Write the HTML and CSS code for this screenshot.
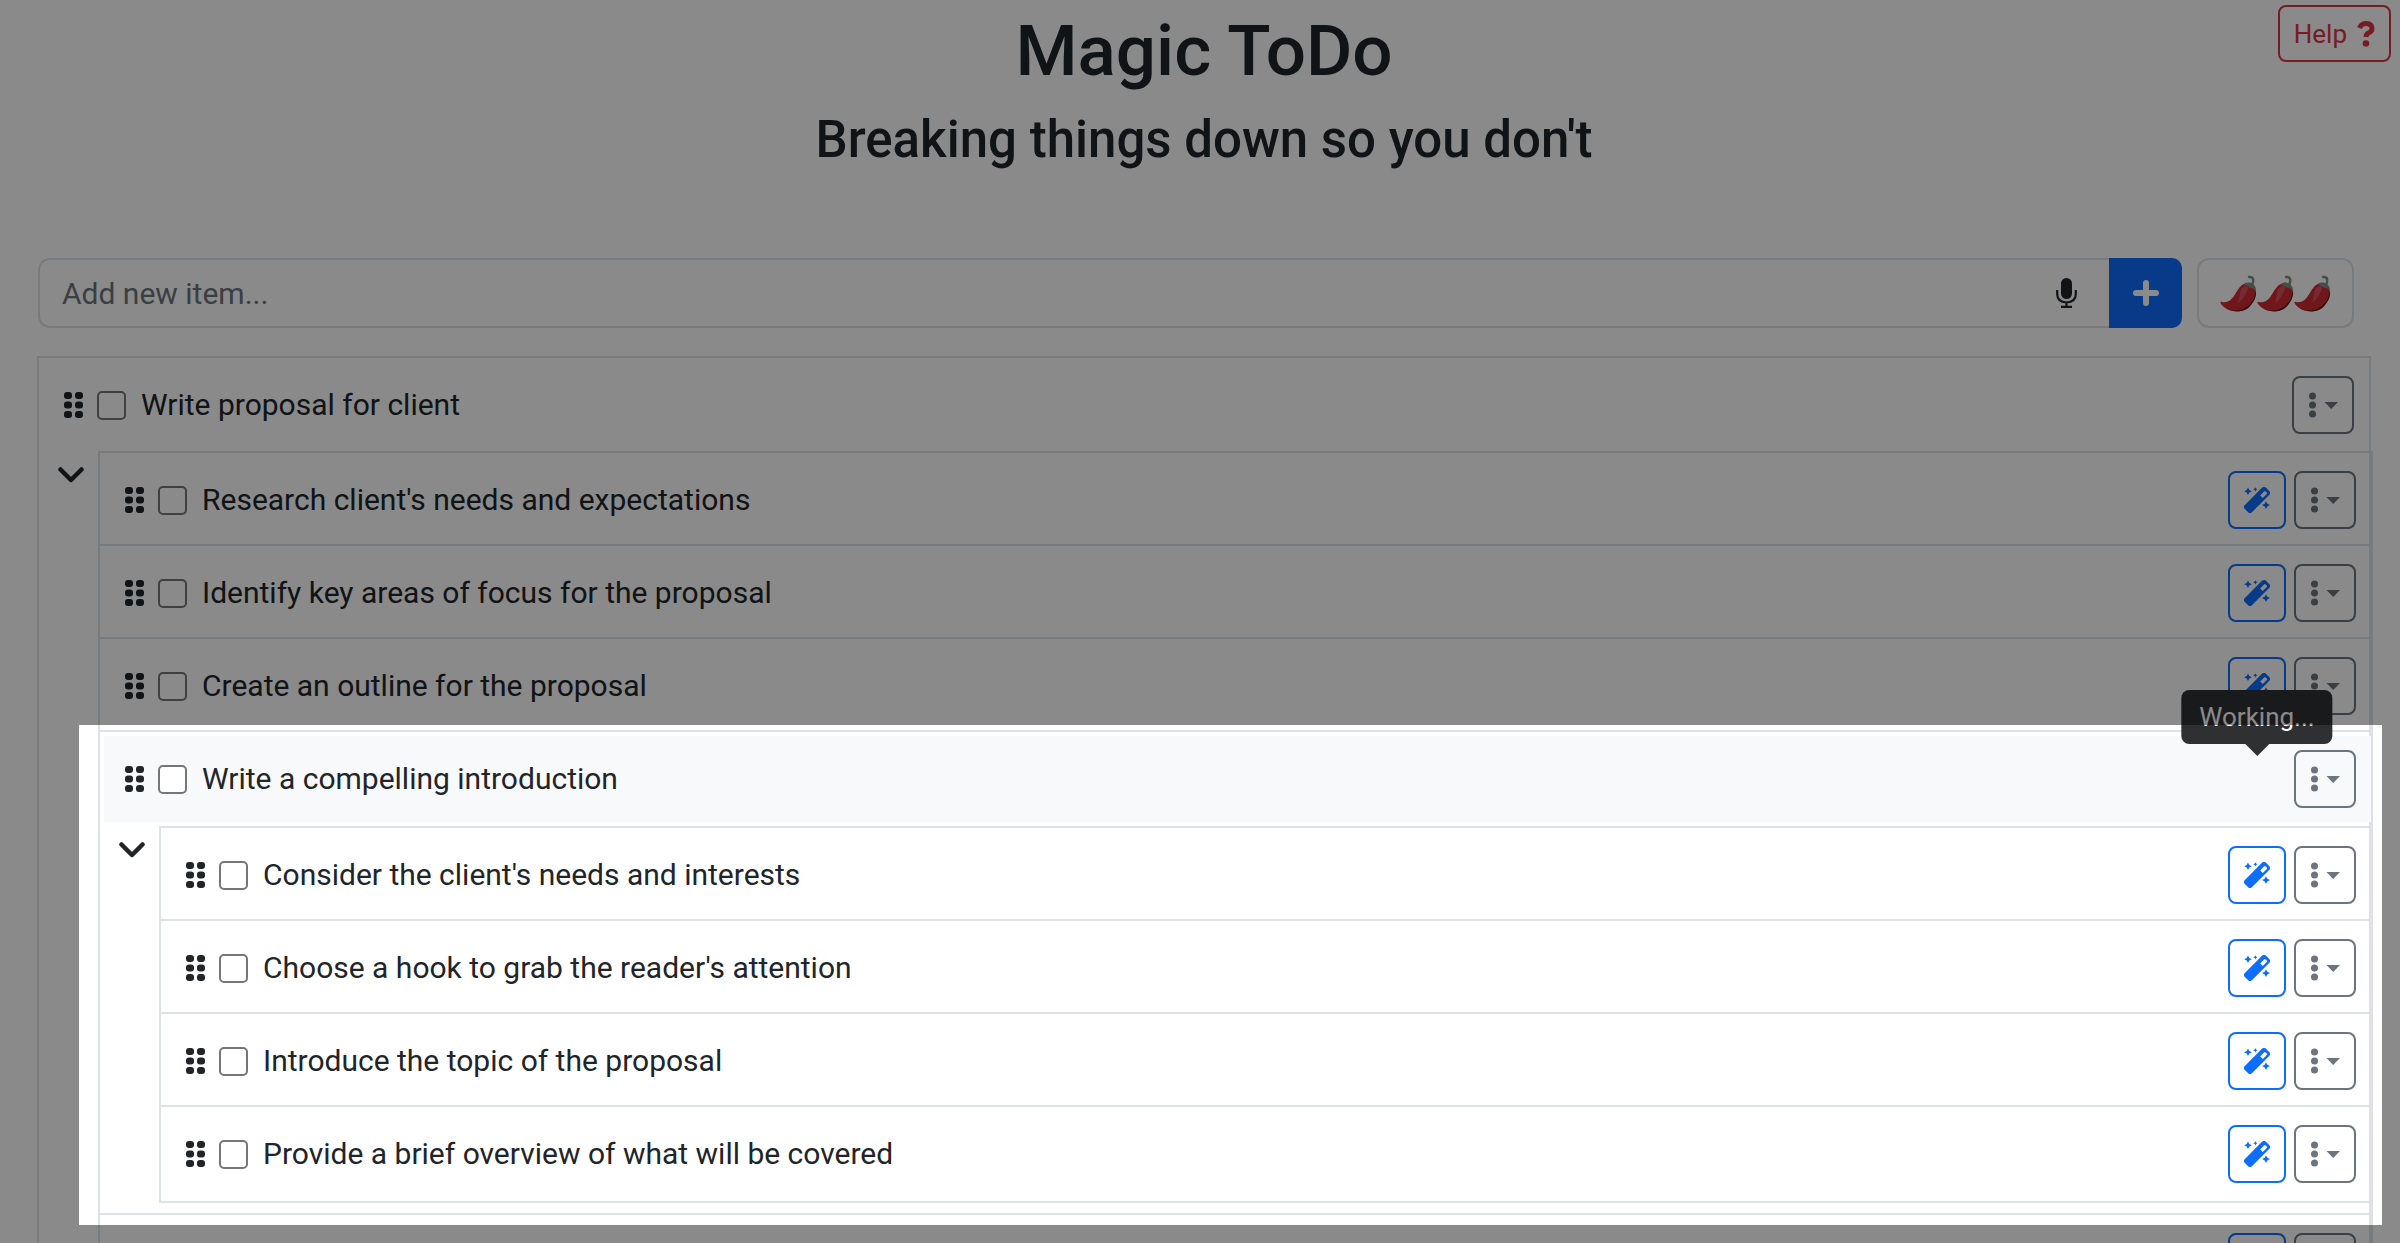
FILE: index.html
```html
<!DOCTYPE html>
<html lang="en">
  <head>
    <meta charset="UTF-8" />
    <title>Magic ToDo</title>
    <link rel="stylesheet" href="styles.css">
  </head>
  <body>
    <!-- shared icons -->
    <svg class="sprite" aria-hidden="true">
      <symbol id="grip" viewBox="0 0 19 26">
        <rect x="0" y="0" width="8" height="7" rx="3" />
        <rect x="11" y="0" width="8" height="7" rx="3" />
        <rect x="0" y="9.5" width="8" height="7" rx="3" />
        <rect x="11" y="9.5" width="8" height="7" rx="3" />
        <rect x="0" y="19" width="8" height="7" rx="3" />
        <rect x="11" y="19" width="8" height="7" rx="3" />
      </symbol>
      <symbol id="wand" viewBox="0 0 26 26">
        <path fill-rule="evenodd" d="M.4 18.400 18.200.6q1.800-1.400 3.600 0l3.600 3.600q1.400 1.800 0 3.600l-17.800 17.800q-1.600 1.200-3.200 0L.4 21.600q-1.200-1.600 0-3.200zM16.200 8.400l2.600 2.600 4-4q.6-.8 0-1.600L21.600 4.400q-.8-.6-1.600 0z" />
        <path d="M4 .4l1.300 2.500 2.500 1.300-2.500 1.300L4 8 2.700 5.500.2 4.200l2.500-1.300zM11.400.2l.7 1.400 1.400.7-1.400.7-.7 1.400-.7-1.400-1.400-.7 1.400-.7zM22 14.200l1.300 2.600 2.600 1.300-2.600 1.300-1.300 2.600-1.300-2.600-2.600-1.300 2.600-1.300z" />
      </symbol>
      <symbol id="dots" viewBox="0 0 29 26">
        <circle cx="3.5" cy="4" r="3.5" />
        <circle cx="3.5" cy="13" r="3.5" />
        <circle cx="3.5" cy="22" r="3.5" />
        <path d="M15.500 10h13.500L22.200 17z" />
      </symbol>
      <symbol id="chevron" viewBox="0 0 26 16">
        <path d="M2.500 2.500 13 13 23.500 2.500" fill="none" stroke="currentColor" stroke-width="4.500" stroke-linecap="round" stroke-linejoin="round" />
      </symbol>
      <symbol id="pepper" viewBox="0 0 37 37">
        <path d="M32 10C34 6 34 1.500 29 2" fill="none" stroke="#7b9285" stroke-width="2.500" stroke-linecap="round" />
        <path d="M20 12C24 7 32 7 35 13 37 21 33 29 27 34 18 39 5 36 .5 28 0 27 1 26.500 2 27 13 29 15 17 20 12z" fill="#cf2b35" />
        <path d="M35 14C36 22 32 29 25 33 18 37 9 36 4 32 14 39 25 37 31 30 36 24 37 19 35 14z" fill="#5e0a12" />
        <path d="M22 13C25 10 29 11 28 14 26 18 23 25 18 28 20 23 19 18 22 13z" fill="#d9505a" />
        <path d="M24 9C28 6 35 8 36 14 34 15 32 12 30 13 28 11 26 11 24 9z" fill="#7b9285" />
      </symbol>
    </svg>

    <button class="help">
      Help
      <svg viewBox="0 0 18 26" width="18" height="26">
        <path d="M2.500 7Q4.500 2.500 9 2.500q6 0 6 5 0 3-3.500 4.500-2.500 1.200-2.500 4" fill="none" stroke="currentColor" stroke-width="5" />
        <circle cx="9" cy="22.500" r="3.300" fill="currentColor" />
      </svg>
    </button>

    <div class="container">
      <h1>Magic ToDo</h1>
      <h2>Breaking things down so you don't</h2>

      <div class="toolbar">
        <div class="input-group">
          <input type="text" placeholder="Add new item..." aria-label="Add new item" />
          <button class="mic" aria-label="Speak">
            <svg viewBox="0 0 21 30" width="21" height="30">
              <rect x="5" y="0" width="11" height="21" rx="5.500" fill="currentColor" />
              <path d="M1.200 12v4q0 8 9.300 8.500 9.300-.5 9.300-8.500v-4M10.500 24v4M5 28.800h11" fill="none" stroke="currentColor" stroke-width="2.200" />
            </svg>
          </button>
          <button class="add" aria-label="Add">
            <svg viewBox="0 0 26 26" width="26" height="26">
              <path d="M13 3v20M3 13h20" stroke="currentColor" stroke-width="6" stroke-linecap="round" />
            </svg>
          </button>
        </div>
        <button class="spice" aria-label="Spiciness">
          <svg><use href="#pepper" /></svg><svg><use href="#pepper" /></svg><svg><use href="#pepper" /></svg>
        </button>
      </div>

      <ul class="list root">
        <li>
          <div class="row">
            <svg class="grip"><use href="#grip" /></svg>
            <input type="checkbox" id="t1" />
            <label for="t1">Write proposal for client</label>
            <button class="btn more" aria-label="More"><svg><use href="#dots" /></svg></button>
          </div>
          <div class="children">
            <button class="toggle" aria-label="Collapse"><svg><use href="#chevron" /></svg></button>
            <ul class="list sub">
              <li>
                <div class="row">
                  <svg class="grip"><use href="#grip" /></svg>
                  <input type="checkbox" id="t2" />
                  <label for="t2">Research client's needs and expectations</label>
                  <button class="btn magic" aria-label="Break down"><svg><use href="#wand" /></svg></button>
                  <button class="btn more" aria-label="More"><svg><use href="#dots" /></svg></button>
                </div>
              </li>
              <li>
                <div class="row">
                  <svg class="grip"><use href="#grip" /></svg>
                  <input type="checkbox" id="t3" />
                  <label for="t3">Identify key areas of focus for the proposal</label>
                  <button class="btn magic" aria-label="Break down"><svg><use href="#wand" /></svg></button>
                  <button class="btn more" aria-label="More"><svg><use href="#dots" /></svg></button>
                </div>
              </li>
              <li>
                <div class="row">
                  <svg class="grip"><use href="#grip" /></svg>
                  <input type="checkbox" id="t4" />
                  <label for="t4">Create an outline for the proposal</label>
                  <button class="btn magic" aria-label="Break down"><svg><use href="#wand" /></svg></button>
                  <button class="btn more" aria-label="More"><svg><use href="#dots" /></svg></button>
                </div>
              </li>
              <li class="current">
                <div class="row active">
                  <svg class="grip"><use href="#grip" /></svg>
                  <input type="checkbox" id="t5" />
                  <label for="t5">Write a compelling introduction</label>
                  <span class="working"><span class="tooltip" role="tooltip">Working...</span></span>
                  <button class="btn more" aria-label="More"><svg><use href="#dots" /></svg></button>
                </div>
                <div class="children">
                  <button class="toggle" aria-label="Collapse"><svg><use href="#chevron" /></svg></button>
                  <ul class="list">
                    <li>
                      <div class="row">
                        <svg class="grip"><use href="#grip" /></svg>
                        <input type="checkbox" id="t6" />
                        <label for="t6">Consider the client's needs and interests</label>
                        <button class="btn magic" aria-label="Break down"><svg><use href="#wand" /></svg></button>
                        <button class="btn more" aria-label="More"><svg><use href="#dots" /></svg></button>
                      </div>
                    </li>
                    <li>
                      <div class="row">
                        <svg class="grip"><use href="#grip" /></svg>
                        <input type="checkbox" id="t7" />
                        <label for="t7">Choose a hook to grab the reader's attention</label>
                        <button class="btn magic" aria-label="Break down"><svg><use href="#wand" /></svg></button>
                        <button class="btn more" aria-label="More"><svg><use href="#dots" /></svg></button>
                      </div>
                    </li>
                    <li>
                      <div class="row">
                        <svg class="grip"><use href="#grip" /></svg>
                        <input type="checkbox" id="t8" />
                        <label for="t8">Introduce the topic of the proposal</label>
                        <button class="btn magic" aria-label="Break down"><svg><use href="#wand" /></svg></button>
                        <button class="btn more" aria-label="More"><svg><use href="#dots" /></svg></button>
                      </div>
                    </li>
                    <li>
                      <div class="row">
                        <svg class="grip"><use href="#grip" /></svg>
                        <input type="checkbox" id="t9" />
                        <label for="t9">Provide a brief overview of what will be covered</label>
                        <button class="btn magic" aria-label="Break down"><svg><use href="#wand" /></svg></button>
                        <button class="btn more" aria-label="More"><svg><use href="#dots" /></svg></button>
                      </div>
                    </li>
                  </ul>
                </div>
                <div class="spotlight"></div>
              </li>
              <li>
                <div class="row">
                  <svg class="grip"><use href="#grip" /></svg>
                  <input type="checkbox" id="t10" />
                  <label for="t10"></label>
                  <button class="btn magic" aria-label="Break down"><svg><use href="#wand" /></svg></button>
                  <button class="btn more" aria-label="More"><svg><use href="#dots" /></svg></button>
                </div>
              </li>
            </ul>
          </div>
        </li>
      </ul>
    </div>
  </body>
</html>
```
FILE: styles.css
```css
* {
  box-sizing: border-box;
}
html {
  height: 100%;
}
body {
  font-family: Roboto, "Liberation Sans", sans-serif;
  font-size: 30px;
  color: #212529;
  background-color: white;
  height: 100%;
  margin: 0;
  overflow: hidden;
}
button,
input {
  font: inherit;
  color: inherit;
  margin: 0;
}
button {
  display: flex;
  align-items: center;
  justify-content: center;
  padding: 0;
  background: none;
  border: none;
  cursor: pointer;
}
svg {
  display: block;
  flex: none;
  fill: currentColor;
}
.sprite {
  position: absolute;
  width: 0;
  height: 0;
}
.container {
  padding: 8px 29px 0 37px;
}
h1,
h2 {
  margin: 0;
  font-weight: 500;
  text-align: center;
}
h1 {
  font-size: 71px;
  line-height: 86px;
}
h2 {
  font-size: 51px;
  line-height: 60px;
  margin-top: 16px;
}
.help {
  position: absolute;
  top: 5px;
  right: 9px;
  gap: 10px;
  height: 57px;
  padding: 0 14px;
  font-size: 26px;
  color: #dc3545;
  border: 2px solid #dc3545;
  border-radius: 8px;
}

/* New item bar */
.toolbar {
  display: flex;
  gap: 15px;
  height: 70px;
  margin: 88px 17px 28px 1px;
}
.input-group {
  display: flex;
  flex: 1;
  border: 2px solid #dee2e6;
  border-right: none;
  border-radius: 12px;
}
.input-group input {
  flex: 1;
  min-width: 0;
  padding: 0 22px;
  border: none;
  background: none;
  outline: none;
}
.input-group input::placeholder {
  color: #6c757d;
  opacity: 1;
}
.mic {
  width: 86px;
}
.add {
  width: 73px;
  margin: -2px 0;
  color: white;
  background-color: #0d6efd;
  border-radius: 0 10px 10px 0;
}
.spice {
  width: 157px;
  border: 2px solid #dee2e6;
  border-radius: 12px;
}
.spice svg {
  width: 37px;
  height: 37px;
}

/* Nested lists */
.list {
  flex: 1;
  margin: 0;
  padding: 0;
  list-style: none;
  border: 2px solid #dee2e6;
}
.list .list {
  margin-right: -2px;
}
.root > li > .children > .sub {
  margin-right: -4px;
}
.list li + li {
  border-top: 2px solid #dee2e6;
}
.row {
  display: flex;
  align-items: center;
  padding: 18px 15px 15px 25px;
}
.row:not(:last-child),
.list .list li:last-child > .row {
  padding-bottom: 18px;
}
.row label {
  flex: 1;
  line-height: 36px;
}
.grip {
  width: 19px;
  height: 26px;
  margin-right: 14px;
}
.row input {
  appearance: none;
  flex: none;
  width: 29px;
  height: 29px;
  margin-right: 15px;
  background-color: white;
  border: 2px solid #767676;
  border-radius: 5px;
}
.btn {
  height: 58px;
  border: 2px solid;
  border-radius: 8px;
}
.magic {
  width: 58px;
  margin-right: 8px;
  color: #0d6efd;
}
.magic svg {
  width: 26px;
  height: 26px;
}
.more {
  width: 62px;
  color: #6c757d;
}
.more svg {
  width: 29px;
  height: 26px;
}
.children {
  display: flex;
  align-items: flex-start;
  margin-top: -1px;
}
.toggle {
  width: 59px;
  padding: 16px 14px 0 0;
  justify-content: flex-end;
}
.toggle svg {
  width: 26px;
  height: 16px;
}

/* Item being broken down */
.current {
  position: relative;
  padding-bottom: 10px;
}
.active {
  margin: 4px 0 5px 4px;
  background-color: #f8f9fb;
}
.list .list .active {
  padding: 14px 15px 14px 21px;
}
.working {
  position: relative;
  width: 58px;
  height: 58px;
  margin-right: 8px;
}
.tooltip {
  position: absolute;
  bottom: 64px;
  left: 50%;
  transform: translateX(-50%);
  padding: 0 18px;
  font-size: 26px;
  line-height: 54px;
  color: white;
  background-color: #2f3032;
  border-radius: 8px;
}
.tooltip::after {
  content: "";
  position: absolute;
  top: 100%;
  left: 50%;
  margin-left: -12px;
  border: 12px solid transparent;
  border-top-color: #2f3032;
  border-bottom: none;
}
/* Dims everything outside the current item */
.spotlight {
  position: absolute;
  z-index: 10;
  top: -7px;
  right: -11px;
  bottom: -12px;
  left: -21px;
  box-shadow: 0 0 0 9999px rgba(0, 0, 0, 0.46);
  pointer-events: none;
}
```
